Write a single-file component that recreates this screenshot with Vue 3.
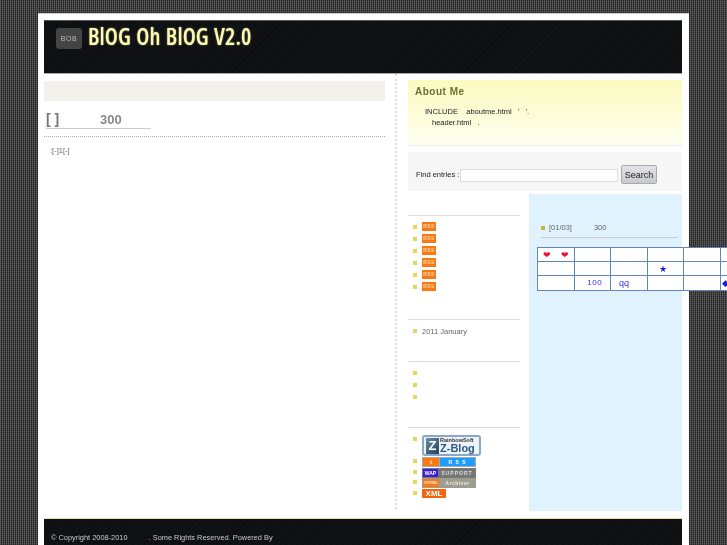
<template>
  <div class="page">
    <header class="header">
      <div class="logo-box">BOB</div>
      <h1 class="logo-text">BlOG Oh BlOG V2.0</h1>
    </header>

    <div class="main">
      <section class="content">
        <div class="nav-bar"></div>
        <div class="post-title"><span class="bracket">[ ]</span><span class="num">300</span></div>
        <div class="post-line"></div>
        <div class="pager">:[-]1[-]</div>
      </section>

      <aside class="side">
        <div class="about">
          <h3>About Me</h3>
          <p class="a1">INCLUDE&nbsp;&nbsp;&nbsp; aboutme.html &nbsp;&nbsp;'&nbsp;&nbsp;&nbsp;'.</p>
          <p class="a2">header.html &nbsp;&nbsp;.</p>
        </div>

        <div class="search">
          <span class="find">Find entries :</span>
          <div class="search-input"></div>
          <button class="search-btn">Search</button>
        </div>

        <div class="cols">
          <div class="left-col">
            <ul class="list rss-list">
              <li v-for="n in 6" :key="n"><span class="rss">RSS</span></li>
            </ul>
            <ul class="list archive">
              <li>2011 January</li>
            </ul>
            <ul class="list empty">
              <li v-for="n in 3" :key="n"></li>
            </ul>
            <ul class="list badges">
              <li class="zblog-row">
                <div class="zblog">
                  <span class="z">Z</span>
                  <div class="zb-text"><span class="zb-top">RainbowSoft</span><span class="zb-name">Z-Blog</span></div>
                </div>
              </li>
              <li>
                <div class="badge b-grey"><span class="b-orange">i</span><span class="b-blue">R S S</span></div>
              </li>
              <li>
                <div class="badge b-dark"><span class="b-wap">WAP</span><span class="b-sup">SUPPORT</span></div>
              </li>
              <li>
                <div class="badge b-light"><span class="b-html">XHTML</span><span class="b-arc">Archiver</span></div>
              </li>
              <li><span class="xml">XML</span></li>
            </ul>
          </div>

          <div class="right-col">
            <div class="rc-title"><i class="dot dark"></i><span>[01/03]</span><span class="rc-num">300</span></div>
            <table class="cal">
              <tbody>
                <tr v-for="(row, i) in rows" :key="i">
                  <td v-for="(c, j) in row" :key="j" :class="c.cls">{{ c.t }}</td>
                </tr>
              </tbody>
            </table>
          </div>
        </div>
      </aside>
    </div>

    <footer class="footer">© Copyright 2008-2010 <span class="gap"></span>. Some Rights Reserved. Powered By</footer>
  </div>
</template>

<script setup>
const c = (t = '', cls = '') => ({ t, cls })
const rows = [
  [c('❤    ❤', 'hearts'), c(), c(), c(), c(), c()],
  [c(), c(), c(), c('★', 'star'), c(), c()],
  [c(), c('100', 'hundred'), c('qq', 'qq'), c(), c(), c('◆', 'dia')]
]
</script>

<style>
html, body {
  margin: 0;
  height: 100%;
  overflow: hidden;
  background-color: #3a3a3a;
  background-image:
    repeating-linear-gradient(0deg, rgba(0, 0, 0, .22) 0 1px, rgba(255, 255, 255, .03) 1px 2px),
    repeating-linear-gradient(90deg, #5c5c5c 0 1px, #2e2e2e 1px 2px);
}
</style>

<style scoped>
.page {
  box-sizing: border-box;
  width: 651px;
  height: 532px;
  margin: 13px 0 0 38px;
  padding: 6px 7px 0 6px;
  background: #fff;
  border-top: 1px solid #ccc;
  font-family: "Liberation Sans", Arial, sans-serif;
  filter: blur(.3px);
}
.header {
  box-sizing: border-box;
  height: 54px;
  display: flex;
  align-items: flex-start;
  padding: 7px 0 0 12px;
  background: repeating-linear-gradient(135deg, #0e0f11 0 2px, #101215 2px 4px);
  border-top: 1px solid #555;
  border-bottom: 1px solid #aaa;
}
.logo-box {
  width: 26px;
  height: 21px;
  background: #444;
  border-radius: 3px;
  color: #bbb;
  font-size: 7px;
  letter-spacing: .6px;
  line-height: 21px;
  text-align: center;
}
.logo-text {
  margin: -8px 0 0 6px;
  font-family: "Open Sans", sans-serif;
  font-stretch: condensed;
  font-weight: 600;
  font-size: 23px;
  line-height: 32px;
  word-spacing: 1px;
  letter-spacing: .1px;
  color: #fdfab4;
  text-shadow: 0 0 2px rgba(250, 245, 170, .55);
}
.main { display: flex; height: 444px; }
.content {
  width: 353px;
  padding-top: 7px;
  box-sizing: border-box;
  border-right: 2px dotted #ddd;
  height: 435px;
}
.nav-bar { width: 341px; height: 20px; background: #f2f1ec; }
.post-title {
  width: 105px;
  height: 28px;
  margin-left: 2px;
  box-sizing: border-box;
  padding-top: 10px;
  display: flex;
  font-size: 13px;
  line-height: 17px;
  font-weight: bold;
  color: #888;
  border-bottom: 1px solid #ccc;
}
.bracket { width: 54px; color: #777; font-size: 14px; }
.post-line { width: 341px; margin-top: 7px; border-top: 1px dotted #aaa; }
.pager { margin: 9px 0 0 6px; font-size: 7.5px; line-height: 10px; color: #666; }

.side { width: 274px; margin-left: 11px; padding-top: 6px; }
.about {
  box-sizing: border-box;
  height: 66px;
  padding: 5px 0 0 7px;
  background: linear-gradient(180deg, #fbfbc0 0, #fdfde0 70%, #fefef0 100%);
  border-bottom: 1px solid #eee;
}
.about h3 { margin: 0 0 8px; font-size: 10px; line-height: 13px; letter-spacing: .5px; color: #6e6d35; }
.about p { margin: 0; font-size: 7.5px; line-height: 11px; color: #222; }
.a1 { padding-left: 10px; }
.a2 { padding-left: 17px; }
.search {
  box-sizing: border-box;
  height: 39px;
  margin-top: 6px;
  padding: 13px 0 0 8px;
  display: flex;
  align-items: flex-start;
  background: #f6f6f6;
}
.find { width: 44px; font-size: 7.5px; line-height: 19px; color: #222; white-space: nowrap; }
.search-input {
  box-sizing: border-box;
  width: 158px;
  height: 13px;
  margin: 4px 0 0 0;
  background: #fff;
  border: 1px solid #ddd;
}
.search-btn {
  box-sizing: border-box;
  width: 36px;
  height: 19px;
  margin: 0 0 0 3px;
  padding: 0;
  background: linear-gradient(180deg, #e2e2e8, #c8c8d0);
  border: 1px solid #aaa;
  border-radius: 2px;
  font-family: "Liberation Sans", Arial, sans-serif;
  font-size: 9px;
  color: #222;
}
.cols { display: flex; margin-top: 3px; }
.left-col { width: 112px; padding-top: 21px; }
.list { margin: 0; padding: 6px 0 0 5px; list-style: none; border-top: 1px solid #ddd; }
.list li {
  position: relative;
  padding-left: 9px;
  height: 12px;
  line-height: 12px;
  font-size: 7.5px;
  color: #666;
}
.list li::before {
  content: "";
  position: absolute;
  left: 0;
  top: 3px;
  width: 4px;
  height: 4px;
  background: #e8d560;
}
.rss-list { height: 97px; }
.rss {
  display: block;
  width: 14px;
  height: 9px;
  background: #f97a14;
  color: #ffd9b0;
  font-size: 5px;
  line-height: 9px;
  text-align: center;
  font-weight: bold;
  letter-spacing: .4px;
}
.archive { height: 35px; }
.empty { height: 59px; }
.badges { padding-top: 7px; }
.badges li { height: 10.5px; }
.badges li::before { top: 2px; }
.badges .zblog-row { height: 22px; }
.zblog {
  box-sizing: border-box;
  width: 59px;
  height: 21px;
  display: flex;
  border: 2px solid #8aa7c4;
  border-radius: 3px;
  background: #eef3f8;
  padding: 0 0 0 2px;
  gap: 1px;
}
.z {
  width: 13px;
  height: 16px;
  margin-top: 1px;
  background: linear-gradient(135deg, #6f8ea8, #1f3f5c);
  color: #fff;
  font-size: 13px;
  font-weight: bold;
  line-height: 16px;
  text-align: center;
}
.zb-text { display: flex; flex-direction: column; white-space: nowrap; }
.zb-top { font-size: 5.5px; line-height: 6px; font-weight: bold; color: #333; }
.zb-name { font-size: 11px; line-height: 11px; font-weight: bold; color: #2d5a82; }
.badge { display: flex; width: 54px; height: 10px; gap: 1px; padding: 1px; box-sizing: border-box; font-size: 5px; line-height: 8px; font-weight: bold; text-align: center; }
.b-grey { background: #aaa; color: #fff; }
.b-orange { width: 16px; background: #f97a14; }
.b-blue { flex: 1; background: #1e9dfc; letter-spacing: 1px; }
.b-dark { background: #777; color: #ddd; }
.b-wap { width: 15px; background: #3a1de0; color: #fff; }
.b-sup { flex: 1; letter-spacing: 1px; }
.b-light { background: #9d9d90; color: #eee; }
.b-html { width: 16px; background: #f97a14; font-size: 4px; }
.b-arc { flex: 1; letter-spacing: .5px; }
.xml {
  display: block;
  width: 24px;
  height: 9px;
  background: #f5640f;
  color: #fff;
  font-size: 8px;
  line-height: 9px;
  font-weight: bold;
  text-align: center;
}

.right-col {
  width: 153px;
  height: 317px;
  margin-left: 9px;
  padding: 27px 0 0 8px;
  box-sizing: border-box;
  background: #e0f2fd;
}
.rc-title {
  display: flex;
  align-items: center;
  width: 137px;
  margin-left: 4px;
  height: 13px;
  padding-bottom: 3px;
  border-bottom: 1px solid #ccc;
  font-size: 7.5px;
  line-height: 10px;
  color: #666;
}
.dot { width: 4px; height: 4px; margin: 0 4px 0 0; background: #c8b040; }
.rc-num { margin-left: 22px; }
.cal {
  margin-top: 9px;
  border-collapse: collapse;
  table-layout: fixed;
  width: 219px;
  background: #fff;
  font-size: 8px;
  color: #3030e8;
}
.cal td {
  width: 36.5px;
  height: 14px;
  padding: 0 1px;
  box-sizing: border-box;
  border: 1px solid #5f88b4;
  line-height: 12px;
  text-align: center;
  letter-spacing: .5px;
  white-space: pre;
}
.cal tr:last-child td { height: 15px; }
.cal td.hearts { color: #f01040; letter-spacing: 0; font-size: 9px; }
.cal td.star { color: #1a1ae0; font-size: 9px; padding-right: 6px; }
.cal td.hundred { padding-left: 6px; }
.cal td.qq { text-align: left; padding-left: 8px; font-size: 9px; letter-spacing: 0; }
.cal td.dia { color: #1a1ae0; text-align: left; font-size: 9px; }

.footer {
  box-sizing: border-box;
  height: 40px;
  padding: 13px 0 0 7px;
  background: repeating-linear-gradient(135deg, #0e0f11 0 2px, #101215 2px 4px);
  border-top: 1px solid #e8dfa0;
  color: #c8c8c8;
  font-size: 7.4px;
  line-height: 11px;
}
.gap { display: inline-block; width: 19px; }
</style>
